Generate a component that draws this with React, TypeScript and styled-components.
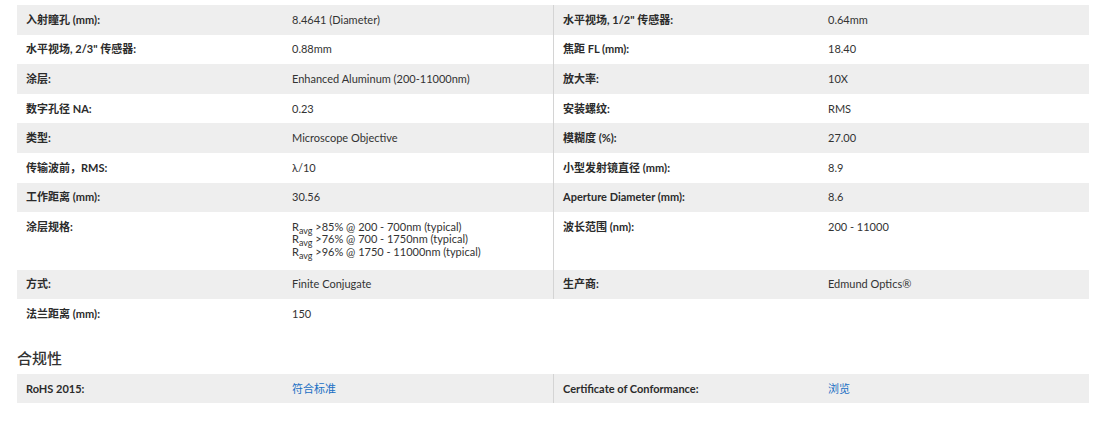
import React from "react";
import styled, { createGlobalStyle } from "styled-components";

const GlobalStyle = createGlobalStyle`
  html, body { margin: 0; padding: 0; background: #ffffff; }
  body {
    font-family: "Lato", "Noto Sans CJK SC", sans-serif;
    color: #333333;
  }
`;

const Page = styled.div`
  padding: 5px 12px 0 17px;
`;

const Table = styled.div`
  display: flex;
  flex-direction: column;
`;

const Row = styled.div<{ $shade: boolean }>`
  display: grid;
  grid-template-columns: 266px 270px 266px 1fr;
  background: ${(p) => (p.$shade ? "#eeeeee" : "#ffffff")};
`;

const Cell = styled.div<{ $label?: boolean; $divider?: boolean }>`
  padding: 8.8px 9px;
  font-size: 11px;
  line-height: 12px;
  font-weight: ${(p) => (p.$label ? 700 : 400)};
  color: ${(p) => (p.$label ? "#2b2b2b" : "#333333")};
  border-left: ${(p) => (p.$divider ? "1px solid #d4d4d4" : "none")};
`;

const Link = styled.a`
  color: #1a6fc4;
  text-decoration: none;
`;

const SpecList = styled.div`
  padding-bottom: 3px;
`;

const SpecLine = styled.div`
  line-height: 12.3px;
`;

const Sub = styled.sub`
  font-size: 9px;
  line-height: 0;
  vertical-align: -3px;
`;

const Heading = styled.h3`
  margin: 19px 0 6px 0;
  font-size: 15px;
  line-height: 20px;
  font-weight: 500;
  color: #333333;
`;

type Pair = [React.ReactNode, React.ReactNode];

const ravg = (rest: string) => (
  <SpecLine>
    R<Sub>avg</Sub> {rest}
  </SpecLine>
);

const specs: { left: Pair; right?: Pair }[] = [
  { left: ["入射瞳孔 (mm):", "8.4641 (Diameter)"], right: ["水平视场, 1/2\" 传感器:", "0.64mm"] },
  { left: ["水平视场, 2/3\" 传感器:", "0.88mm"], right: ["焦距 FL (mm):", "18.40"] },
  { left: ["涂层:", "Enhanced Aluminum (200-11000nm)"], right: ["放大率:", "10X"] },
  { left: ["数字孔径 NA:", "0.23"], right: ["安装螺纹:", "RMS"] },
  { left: ["类型:", "Microscope Objective"], right: ["模糊度 (%):", "27.00"] },
  { left: ["传输波前，RMS:", "λ/10"], right: ["小型发射镜直径 (mm):", "8.9"] },
  { left: ["工作距离 (mm):", "30.56"], right: ["Aperture Diameter (mm):", "8.6"] },
  {
    left: [
      "涂层规格:",
      <SpecList>
        {ravg(">85% @ 200 - 700nm (typical)")}
        {ravg(">76% @ 700 - 1750nm (typical)")}
        {ravg(">96% @ 1750 - 11000nm (typical)")}
      </SpecList>,
    ],
    right: ["波长范围 (nm):", "200 - 11000"],
  },
  { left: ["方式:", "Finite Conjugate"], right: ["生产商:", "Edmund Optics®"] },
  { left: ["法兰距离 (mm):", "150"] },
];

export default function App() {
  return (
    <>
      <GlobalStyle />
      <Page>
        <Table>
          {specs.map((r, i) => (
            <Row key={i} $shade={i % 2 === 0}>
              <Cell $label>{r.left[0]}</Cell>
              <Cell>{r.left[1]}</Cell>
              {r.right ? (
                <>
                  <Cell $label $divider>
                    {r.right[0]}
                  </Cell>
                  <Cell>{r.right[1]}</Cell>
                </>
              ) : null}
            </Row>
          ))}
        </Table>
        <Heading>合规性</Heading>
        <Table>
          <Row $shade>
            <Cell $label>RoHS 2015:</Cell>
            <Cell>
              <Link href="#">符合标准</Link>
            </Cell>
            <Cell $label $divider>
              Certificate of Conformance:
            </Cell>
            <Cell>
              <Link href="#">浏览</Link>
            </Cell>
          </Row>
        </Table>
      </Page>
    </>
  );
}
